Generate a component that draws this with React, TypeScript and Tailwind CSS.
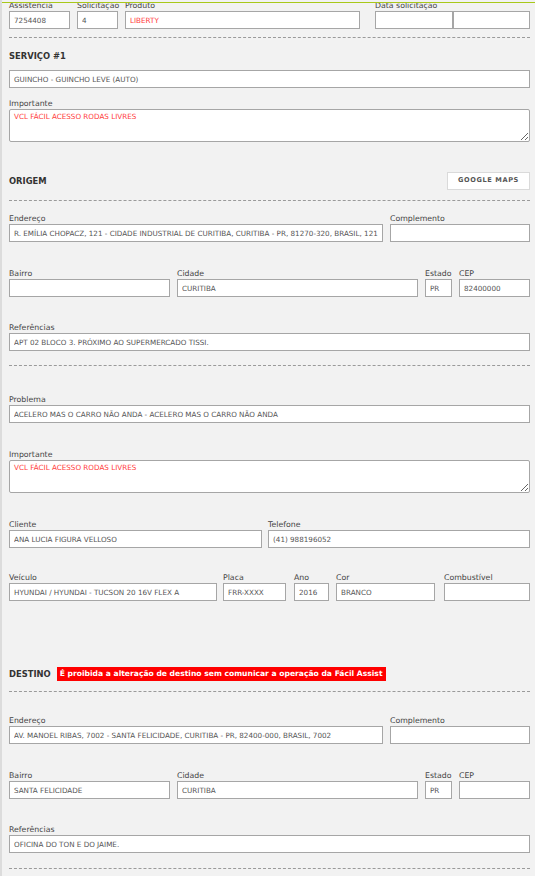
import React from "react"

const inputCls =
  "block w-full h-[18px] px-[4px] bg-white border border-[#a6a6a6] text-[7.2px] text-[#555] uppercase outline-none font-['DejaVu_Sans',sans-serif]"

function Label({ children }: { children?: React.ReactNode }) {
  return <div className="h-[10px] leading-[10px] text-[7.8px] text-[#444] whitespace-nowrap">{children}</div>
}

function Field({
  label,
  value = "",
  className = "",
  red,
}: {
  label?: string
  value?: string
  className?: string
  red?: boolean
}) {
  return (
    <div className={className}>
      <Label>{label}</Label>
      <input readOnly value={value} className={`${inputCls} ${red ? "text-[#ff3b3b]" : ""}`} />
    </div>
  )
}

function Area({ label, value }: { label: string; value: string }) {
  return (
    <div>
      <Label>{label}</Label>
      <textarea
        readOnly
        value={value}
        className="block w-full h-[33px] px-[4px] py-[2px] bg-white border border-[#a6a6a6] rounded-[2px] text-[7.2px] text-[#ff3b3b] outline-none font-['DejaVu_Sans',sans-serif]"
      />
    </div>
  )
}

function Dashed({ className = "" }: { className?: string }) {
  return <div className={`border-t border-dashed border-[#9a9a9a] ${className}`} />
}

function Heading({ children }: { children: React.ReactNode }) {
  return <span className="text-[8.4px] font-bold text-[#333]">{children}</span>
}

export default function App() {
  return (
    <div className="relative min-h-[876px] bg-[#f2f2f2] border-l-2 border-[#dcdcdc] font-['DejaVu_Sans',sans-serif] overflow-hidden">
      {/* header bottom line */}
      <div className="absolute top-[2px] left-0 right-0 h-px bg-[#a8c81a]" />

      <div className="pl-[7px] pr-[5px] pt-[1px]">
        {/* request row */}
        <div className="flex">
          <Field label="Assistencia" value="7254408" className="w-[61px]" />
          <Field label="Solicitação" value="4" className="w-[41px] ml-[7px]" />
          <Field label="Produto" value="LIBERTY" red className="w-[235px] ml-[7px]" />
          <div className="ml-[15px] flex-1">
            <Label>Data solicitação</Label>
            <div className="flex">
              <input readOnly className={`${inputCls} !w-[78px]`} />
              <input readOnly className={`${inputCls} flex-1`} />
            </div>
          </div>
        </div>

        <Dashed className="mt-[8px]" />

        {/* serviço */}
        <div className="mt-[10px] h-[12px] leading-[12px]">
          <Heading>SERVIÇO #1</Heading>
        </div>
        <input readOnly value="GUINCHO - GUINCHO LEVE (AUTO)" className={`${inputCls} mt-[10px]`} />
        <div className="mt-[11px]">
          <Area label="Importante" value="VCL FÁCIL ACESSO RODAS LIVRES" />
        </div>

        {/* origem */}
        <div className="mt-[30px] h-[18px] flex items-center justify-between">
          <Heading>ORIGEM</Heading>
          <button className="h-[18px] w-[83px] bg-white border border-[#dadada] text-[6.6px] font-bold tracking-[0.6px] text-[#555]">
            GOOGLE MAPS
          </button>
        </div>
        <Dashed className="mt-[10px]" />

        <div className="flex mt-[13px]">
          <Field
            label="Endereço"
            value="R. EMÍLIA CHOPACZ, 121 - CIDADE INDUSTRIAL DE CURITIBA, CURITIBA - PR, 81270-320, BRASIL, 121"
            className="w-[374px]"
          />
          <Field label="Complemento" className="flex-1 ml-[7px]" />
        </div>
        <div className="flex mt-[27px]">
          <Field label="Bairro" className="w-[161px]" />
          <Field label="Cidade" value="CURITIBA" className="w-[241px] ml-[7px]" />
          <Field label="Estado" value="PR" className="w-[27px] ml-[7px]" />
          <Field label="CEP" value="82400000" className="flex-1 ml-[7px]" />
        </div>
        <Field
          label="Referências"
          value="APT 02 BLOCO 3. PRÓXIMO AO SUPERMERCADO TISSI."
          className="mt-[26px]"
        />
        <Dashed className="mt-[14px]" />

        {/* problema */}
        <Field
          label="Problema"
          value="ACELERO MAS O CARRO NÃO ANDA - ACELERO MAS O CARRO NÃO ANDA"
          className="mt-[29px]"
        />
        <div className="mt-[27px]">
          <Area label="Importante" value="VCL FÁCIL ACESSO RODAS LIVRES" />
        </div>
        <div className="flex mt-[27px]">
          <Field label="Cliente" value="ANA LUCIA FIGURA VELLOSO" className="w-[253px]" />
          <Field label="Telefone" value="(41) 988196052" className="flex-1 ml-[6px]" />
        </div>
        <div className="flex mt-[25px]">
          <Field label="Veículo" value="HYUNDAI / HYUNDAI - TUCSON 20 16V FLEX A" className="w-[208px]" />
          <Field label="Placa" value="FRR-XXXX" className="w-[63px] ml-[6px]" />
          <Field label="Ano" value="2016" className="w-[35px] ml-[8px]" />
          <Field label="Cor" value="BRANCO" className="w-[99px] ml-[7px]" />
          <Field label="Combustível" className="flex-1 ml-[9px]" />
        </div>

        {/* destino */}
        <div className="mt-[66px] h-[14px] flex items-center">
          <Heading>DESTINO</Heading>
          <span className="ml-[6px] h-[14px] leading-[14px] px-[3px] bg-[#ff0000] text-white text-[7.6px] font-bold whitespace-nowrap">
            É proibida a alteração de destino sem comunicar a operação da Fácil Assist
          </span>
        </div>
        <Dashed className="mt-[10px]" />

        <div className="flex mt-[24px]">
          <Field
            label="Endereço"
            value="AV. MANOEL RIBAS, 7002 - SANTA FELICIDADE, CURITIBA - PR, 82400-000, BRASIL, 7002"
            className="w-[374px]"
          />
          <Field label="Complemento" className="flex-1 ml-[7px]" />
        </div>
        <div className="flex mt-[27px]">
          <Field label="Bairro" value="SANTA FELICIDADE" className="w-[161px]" />
          <Field label="Cidade" value="CURITIBA" className="w-[241px] ml-[7px]" />
          <Field label="Estado" value="PR" className="w-[27px] ml-[7px]" />
          <Field label="CEP" className="flex-1 ml-[7px]" />
        </div>
        <Field label="Referências" value="OFICINA DO TON E DO JAIME." className="mt-[26px]" />
        <Dashed className="mt-[15px]" />
      </div>
    </div>
  )
}
